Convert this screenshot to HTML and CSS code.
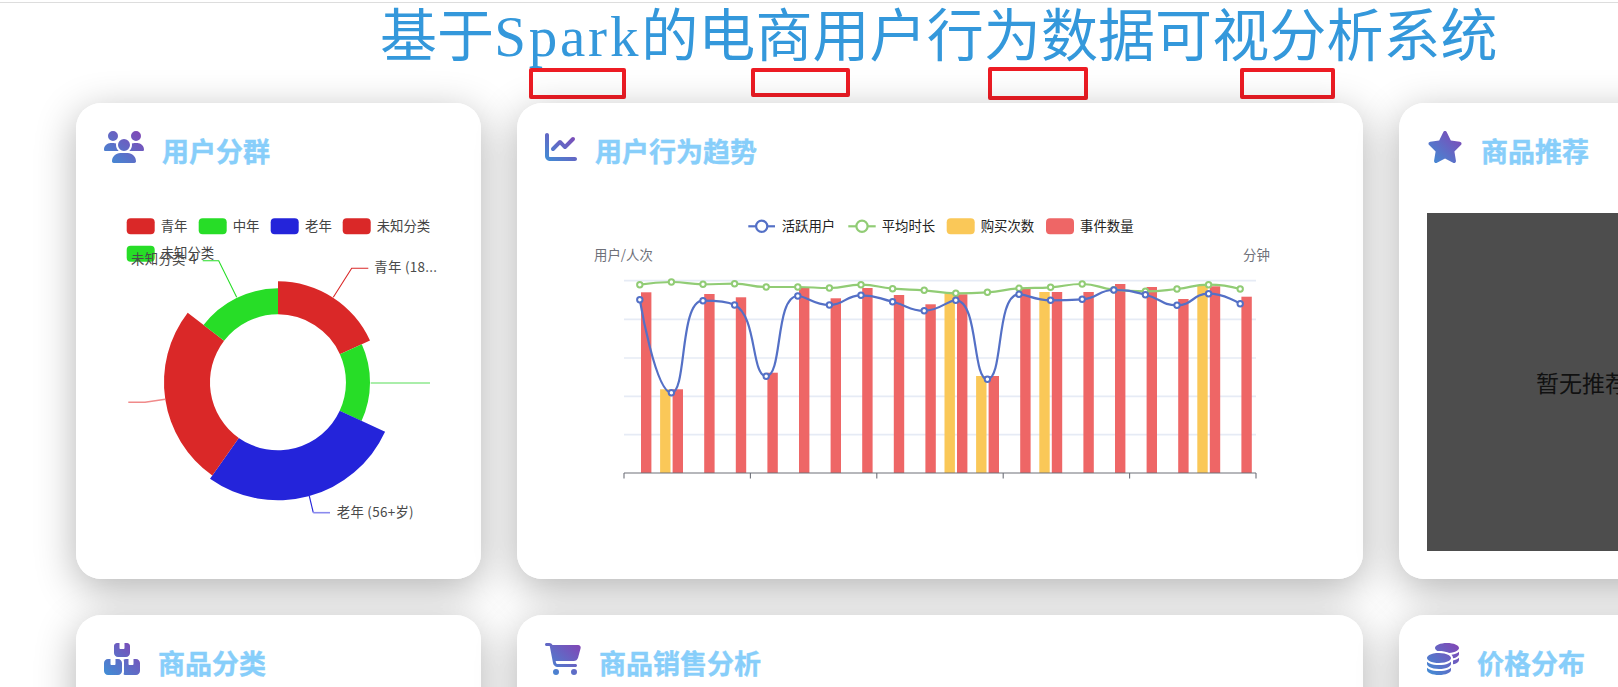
FILE: index.html
```html
<!DOCTYPE html>
<html lang="zh">
<head>
    <meta charset="UTF-8">
    <meta name="viewport" content="width=device-width, initial-scale=1.0">
    <title>基于Spark的电商用户行为数据可视分析系统</title>
    <link rel="stylesheet" href="styles.css">
</head>
<body>
    <svg width="0" height="0" class="defs">
        <defs>
            <linearGradient id="iconGrad" x1="0" y1="1" x2="1" y2="0">
                <stop offset="0" stop-color="#3f8fd6"/>
                <stop offset="1" stop-color="#8443b4"/>
            </linearGradient>
        </defs>
    </svg>

    <header class="page-head">
        <h1 class="page-title">基于<span class="latin">Spark</span>的电商用户行为数据可视分析系统</h1>
        <div class="stat-row">
            <div class="stat-box box-a"></div>
            <div class="stat-box box-b"></div>
            <div class="stat-box box-c"></div>
            <div class="stat-box box-d"></div>
        </div>
    </header>

    <main class="dashboard">
        <section class="card">
            <div class="card-head">
                <svg class="icon" viewBox="0 0 640 512"><path d="M144 0a80 80 0 1 1 0 160A80 80 0 1 1 144 0zM512 0a80 80 0 1 1 0 160A80 80 0 1 1 512 0zM0 298.7C0 239.8 47.8 192 106.7 192h42.7c15.9 0 31 3.5 44.6 9.7c-1.3 7.2-1.9 14.7-1.9 22.3c0 38.2 16.8 72.5 43.3 96c-.2 0-.4 0-.7 0H21.3C9.6 320 0 310.4 0 298.7zM405.3 320c-.2 0-.4 0-.7 0c26.6-23.5 43.3-57.8 43.3-96c0-7.6-.7-15-1.9-22.3c13.6-6.3 28.7-9.7 44.6-9.7h42.7C592.2 192 640 239.8 640 298.7c0 11.8-9.6 21.3-21.3 21.3H405.3zM224 224a96 96 0 1 1 192 0 96 96 0 1 1 -192 0zM128 485.3C128 411.7 187.7 352 261.3 352H378.7C452.3 352 512 411.7 512 485.3c0 14.7-11.9 26.7-26.7 26.7H154.7c-14.7 0-26.7-11.9-26.7-26.7z"/></svg>
                <h2 class="card-title">用户分群</h2>
            </div>
            <svg class="chart pie-chart" viewBox="104 200 349 320">
                <path fill="#da2828" d="M278 281.3A101 101 0 0 1 370 340.6L339.9 354.2A68 68 0 0 0 278 314.3Z"/>
                <path fill="#27dd27" d="M361.8 344.3A92 92 0 0 1 361.5 420.9L339.7 410.8A68 68 0 0 0 339.9 354.2Z"/>
                <path fill="#2424da" d="M385.1 431.8A118 118 0 0 1 210 478.7L238.8 437.9A68 68 0 0 0 339.7 410.8Z"/>
                <path fill="#da2828" d="M212.3 475.5A114 114 0 0 1 187.7 312.7L224.1 340.8A68 68 0 0 0 238.8 437.9Z"/>
                <path fill="#27dd27" d="M203.5 325A94 94 0 0 1 278 288.3V314.3A68 68 0 0 0 224.1 340.8Z"/>

                <polyline class="guide" stroke="#da2828" points="333.3,297.3 351.7,268.3 368.3,268.3"/>
                <polyline class="guide" stroke="#27dd27" points="236.7,297.3 218.7,260.7 202.7,260.7"/>
                <polyline class="guide wide" stroke="#8ee88e" points="370.7,383 430,383"/>
                <polyline class="guide wide" stroke="#f08a8a" points="165.3,399.3 145,402.3 128.3,402.3"/>
                <polyline class="guide" stroke="#2424da" points="309.3,496 313.3,512.7"/>
                <polyline class="guide wide" stroke="#8a8aee" points="313.3,512.7 330,512.7"/>

                <rect class="swatch" fill="#da2828" x="126.7" y="218.3" width="28" height="16" rx="4"/>
                <text class="legend-text" x="160.7" y="231">青年</text>
                <rect class="swatch" fill="#27dd27" x="198.7" y="218.3" width="28" height="16" rx="4"/>
                <text class="legend-text" x="232.7" y="231">中年</text>
                <rect class="swatch" fill="#2424da" x="270.7" y="218.3" width="28" height="16" rx="4"/>
                <text class="legend-text" x="305" y="231">老年</text>
                <rect class="swatch" fill="#da2828" x="342.7" y="218.3" width="28" height="16" rx="4"/>
                <text class="legend-text" x="376.7" y="231">未知分类</text>
                <rect class="swatch" fill="#27dd27" x="126.7" y="245.7" width="28" height="16" rx="4"/>
                <text class="legend-text" x="160.7" y="258">未知分类</text>

                <text class="pie-label" x="131" y="264">未知分类 4</text>
                <text class="pie-label" x="374.3" y="272">青年 (18...</text>
                <text class="pie-label" x="336.7" y="517">老年 (56+岁)</text>
            </svg>
        </section>

        <section class="card">
            <div class="card-head">
                <svg class="icon" viewBox="0 0 512 512"><path d="M64 64c0-17.7-14.3-32-32-32S0 46.3 0 64V400c0 44.2 35.8 80 80 80H480c17.7 0 32-14.3 32-32s-14.3-32-32-32H80c-8.8 0-16-7.2-16-16V64zm406.6 86.6c12.5-12.5 12.5-32.8 0-45.3s-32.8-12.5-45.3 0L320 210.7l-57.4-57.4c-12.5-12.5-32.8-12.5-45.3 0l-112 112c-12.5 12.5-12.5 32.8 0 45.3s32.8 12.5 45.3 0L240 221.3l57.4 57.4c12.5 12.5 32.8 12.5 45.3 0l128-128z"/></svg>
                <h2 class="card-title">用户行为趋势</h2>
            </div>
            <svg class="chart trend-chart" viewBox="545 200 790 320">
                <g class="legend-sym" stroke="#5470c6">
                    <line x1="748.3" y1="226.3" x2="775" y2="226.3"/>
                    <circle cx="761.7" cy="226.3" r="5.6"/>
                </g>
                <text class="legend-text dark" x="781.7" y="231">活跃用户</text>
                <g class="legend-sym" stroke="#91cc75">
                    <line x1="848.3" y1="226.3" x2="875.7" y2="226.3"/>
                    <circle cx="862" cy="226.3" r="5.6"/>
                </g>
                <text class="legend-text dark" x="881.7" y="231">平均时长</text>
                <rect class="swatch" fill="#fac858" x="946.7" y="218.3" width="28" height="16" rx="4"/>
                <text class="legend-text dark" x="980.7" y="231">购买次数</text>
                <rect class="swatch" fill="#ee6666" x="1046" y="218.3" width="28" height="16" rx="4"/>
                <text class="legend-text dark" x="1080" y="231">事件数量</text>

                <text class="axis-name" x="594" y="260">用户/人次</text>
                <text class="axis-name" x="1243" y="260">分钟</text>

                <g class="grid-lines">
                    <line x1="624" x2="1256" y1="280.7" y2="280.7"/>
                    <line x1="624" x2="1256" y1="319.3" y2="319.3"/>
                    <line x1="624" x2="1256" y1="358" y2="358"/>
                    <line x1="624" x2="1256" y1="396.3" y2="396.3"/>
                    <line x1="624" x2="1256" y1="434.7" y2="434.7"/>
                </g>
                <g id="trendSeries"></g>
                <g class="axis-lines">
                    <line x1="624" x2="1256" y1="473" y2="473"/>
                    <line x1="624" x2="624" y1="473" y2="478.6"/>
                    <line x1="750.4" x2="750.4" y1="473" y2="478.6"/>
                    <line x1="876.8" x2="876.8" y1="473" y2="478.6"/>
                    <line x1="1003.2" x2="1003.2" y1="473" y2="478.6"/>
                    <line x1="1129.6" x2="1129.6" y1="473" y2="478.6"/>
                    <line x1="1256" x2="1256" y1="473" y2="478.6"/>
                </g>
            </svg>
        </section>

        <section class="card">
            <div class="card-head">
                <svg class="icon" viewBox="0 0 576 512"><path d="M316.9 18C311.6 7 300.4 0 288.1 0s-23.4 7-28.8 18L195 150.3 51.4 171.5c-12 1.8-22 10.2-25.7 21.7s-.7 24.2 7.9 32.7L137.8 329 113.2 474.7c-2 12 3 24.2 12.9 31.3s23 8 33.8 2.3l128.3-68.5 128.3 68.5c10.8 5.7 23.9 4.9 33.8-2.3s14.9-19.3 12.9-31.3L438.5 329 542.7 225.9c8.6-8.5 11.7-21.2 7.9-32.7s-13.7-19.9-25.7-21.7L381.2 150.3 316.9 18z"/></svg>
                <h2 class="card-title">商品推荐</h2>
            </div>
            <div class="empty-box">暂无推荐数据</div>
        </section>

        <section class="card">
            <div class="card-head">
                <svg class="icon" viewBox="0 0 576 512"><path d="M248 0H208c-26.5 0-48 21.5-48 48V160c0 35.3 28.7 64 64 64H352c35.3 0 64-28.7 64-64V48c0-26.5-21.5-48-48-48H328V80c0 8.8-7.2 16-16 16H264c-8.8 0-16-7.2-16-16V0zM64 256c-35.3 0-64 28.7-64 64V448c0 35.3 28.7 64 64 64H224c35.3 0 64-28.7 64-64V320c0-35.3-28.7-64-64-64H184v80c0 8.8-7.2 16-16 16H120c-8.8 0-16-7.2-16-16V256H64zM352 512H512c35.3 0 64-28.7 64-64V320c0-35.3-28.7-64-64-64H472v80c0 8.8-7.2 16-16 16H408c-8.8 0-16-7.2-16-16V256H352c-15 0-28.8 5.1-39.7 13.8c4.9 10.4 7.7 22 7.7 34.2V464c0 12.2-2.8 23.8-7.7 34.2C323.2 506.9 337 512 352 512z"/></svg>
                <h2 class="card-title">商品分类</h2>
            </div>
        </section>

        <section class="card">
            <div class="card-head">
                <svg class="icon" viewBox="0 0 576 512"><path d="M0 24C0 10.7 10.7 0 24 0H69.5c22 0 41.5 12.8 50.6 32h411c26.3 0 45.5 25 38.6 50.4l-41 152.3c-8.5 31.4-37 53.3-69.5 53.3H170.7l5.4 28.5c2.2 11.3 12.1 19.5 23.6 19.5H488c13.3 0 24 10.7 24 24s-10.7 24-24 24H199.7c-34.6 0-64.3-24.6-70.7-58.5L77.4 54.5c-.7-3.8-4-6.5-7.9-6.5H24C10.7 48 0 37.3 0 24zM128 464a48 48 0 1 1 96 0 48 48 0 1 1 -96 0zm336-48a48 48 0 1 1 0 96 48 48 0 1 1 0-96z"/></svg>
                <h2 class="card-title">商品销售分析</h2>
            </div>
        </section>

        <section class="card">
            <div class="card-head">
                <svg class="icon" viewBox="0 0 512 512"><path d="M512 80c0 18-14.3 34.6-38.4 48c-29.1 16.1-72.5 27.5-122.3 30.9c-3.7-1.8-7.4-3.5-11.3-5C300.6 137.4 248.2 128 192 128c-8.3 0-16.4 .2-24.5 .6l-1.1-.6C142.3 114.6 128 98 128 80c0-44.2 86-80 192-80S512 35.8 512 80zM160.7 161.1c10.2-.7 20.7-1.1 31.3-1.1c62.2 0 117.4 12.3 152.5 31.4C369.3 204.9 384 221.7 384 240c0 4-.7 7.9-2.1 11.7c-4.6 13.2-17 25.3-35 35.5c0 0 0 0 0 0c-.1 .1-.3 .1-.4 .2l0 0 0 0c-.3 .2-.6 .3-.9 .5c-35 19.4-90.8 32-153.6 32c-59.6 0-112.9-11.3-148.2-29.1c-1.9-.9-3.7-1.9-5.5-2.9C14.3 274.6 0 258 0 240c0-34.8 53.4-64.5 128-75.4c10.5-1.5 21.4-2.7 32.7-3.5zM416 240c0-21.9-10.6-39.9-24.1-53.4c28.3-4.4 54.2-11.4 76.2-20.5c16.3-6.8 31.5-15.2 43.9-25.5V176c0 19.3-16.5 37.1-43.8 50.9c-14.6 7.4-32.4 13.7-52.4 18.5c.1-1.8 .2-3.5 .2-5.3zm-32 96c0 18-14.3 34.6-38.4 48c-1.8 1-3.6 1.9-5.5 2.9C304.9 404.7 251.6 416 192 416c-62.8 0-118.6-12.6-153.6-32C14.3 370.6 0 354 0 336V300.6c12.5 10.3 27.6 18.7 43.9 25.5C83.4 342.6 135.8 352 192 352s108.6-9.4 148.1-25.9c7.8-3.2 15.3-6.9 22.4-10.9c6.1-3.4 11.8-7.2 17.2-11.2c1.5-1.1 2.9-2.3 4.3-3.4V304v5.7V336zm32 0V304 278.1c19-4.2 36.5-9.5 52.1-16c16.3-6.8 31.5-15.2 43.9-25.5V272c0 10.5-5 21-14.9 30.9c-16.3 16.3-45 29.7-81 38.4c.1-1.7 .2-3.5 .2-5.3zM192 448c56.2 0 108.6-9.4 148.1-25.9c16.3-6.8 31.5-15.2 43.9-25.5V432c0 44.2-86 80-192 80S0 476.2 0 432V396.6c12.5 10.3 27.6 18.7 43.9 25.5C83.4 438.6 135.8 448 192 448z"/></svg>
                <h2 class="card-title">价格分布</h2>
            </div>
        </section>
    </main>

    <script src="script.js"></script>
</body>
</html>
```

FILE: styles.css
```css
html, body {
    margin: 0;
    height: 687px;
    overflow: hidden;
    background: #fff;
}
body {
    font-family: "Liberation Serif", "Noto Sans CJK SC", serif;
}
.defs {
    display: block;
    height: 0;
}
.page-head {
    height: 101px;
    box-sizing: border-box;
    border-top: 1px solid #ddd;
    margin-top: 2px;
}
.page-title {
    margin: 0;
    padding: 3px 0 0 380px;
    height: 59px;
    font-size: 57px;
    line-height: 62px;
    font-weight: 400;
    letter-spacing: 0.1px;
    color: #3498db;
    white-space: nowrap;
}
.latin {
    letter-spacing: 2.8px;
}
.stat-row {
    display: flex;
    padding-left: 529px;
    margin-top: 3px;
}
.stat-box {
    box-sizing: border-box;
    height: 31px;
    border: 4px solid #ed1c24;
    border-radius: 2px;
}
.box-a { width: 97px; }
.box-b { width: 99px; height: 29px; margin-left: 125px; }
.box-c { width: 100px; height: 33px; margin-left: 138px; margin-top: -1px; }
.box-d { width: 95px; margin-left: 152px; }

.dashboard {
    display: grid;
    grid-template-columns: 405px 846px 412px;
    grid-template-rows: 476px 476px;
    gap: 36px;
    padding: 0 0 0 76px;
    width: 1800px;
}
.card {
    position: relative;
    box-sizing: border-box;
    padding: 28px;
    background: rgba(255, 255, 255, 0.96);
    border-radius: 25px;
    box-shadow: 0 10px 40px rgba(0, 0, 0, 0.3);
}
.card-head {
    display: flex;
    height: 40px;
}
.icon {
    height: 32px;
    margin-right: 18px;
    fill: url(#iconGrad);
    flex: none;
}
.card-title {
    margin: 4px 0 0;
    font-family: "Noto Sans CJK SC", sans-serif;
    font-size: 27px;
    line-height: 32px;
    font-weight: 700;
    color: #87cefa;
    -webkit-text-stroke: 0.4px #87cefa;
    white-space: nowrap;
}
.chart {
    display: block;
    margin-top: 29px;
    height: 320px;
    font-family: "Noto Sans CJK SC", sans-serif;
}
.pie-chart {
    width: 349px;
}
.trend-chart {
    width: 790px;
}
.guide {
    fill: none;
    stroke-width: 1.1;
}
.guide.wide {
    stroke-width: 1.6;
}
.swatch {
    stroke: none;
}
.legend-text {
    font-size: 13.4px;
    fill: #444;
}
.legend-text.dark {
    fill: #222;
}
.pie-label {
    font-size: 13.4px;
    letter-spacing: 0.3px;
    fill: #4a4a4a;
}
.axis-name {
    font-size: 13.4px;
    fill: #6e7079;
}
.legend-sym {
    fill: #fff;
    stroke-width: 2.2;
}
.grid-lines line {
    stroke: #e6ebf5;
    stroke-width: 1.7;
}
.axis-lines line {
    stroke: #6e7079;
    stroke-width: 1.1;
}
.empty-box {
    display: flex;
    align-items: center;
    justify-content: center;
    margin-top: 42px;
    height: 338px;
    background: #4d4d4d;
    color: #111;
    font-family: "Noto Sans CJK SC", sans-serif;
    font-size: 23px;
    white-space: nowrap;
}
```

FILE: script.js
```js
// 用户行为趋势 chart: bars first, then the two smooth lines on top
var xs = [];
for (var i = 0; i < 20; i++) xs.push(639.8 + 31.6 * i);

var active = [299.7, 392.7, 300.7, 305, 376.3, 296, 305, 295.3, 301.7, 310.7, 300.3, 379.3, 294.3, 300.3, 299.3, 290, 294.7, 305.3, 293.7, 303.7];
var duration = [284.7, 282, 284.3, 283.7, 287, 287, 288, 284.7, 288.7, 290.3, 293.3, 292.3, 288.3, 287.3, 284, 289.7, 291.3, 289, 284.7, 289];
var events = [292.3, 389.3, 294, 297.3, 372.7, 288, 298.3, 288, 295, 304.3, 294.3, 376, 289, 292, 292, 284, 287, 299, 286.3, 296.7];
var buys = { 1: 389.3, 10: 293.3, 11: 376, 13: 292, 18: 286 };

var BASE = 473;
var BAR = 10.4;

function clamp(v, a, b) {
    return Math.max(Math.min(a, b), Math.min(v, Math.max(a, b)));
}

function smoothPath(ys) {
    // control points kept between neighbours so the curve doesn't overshoot
    var smooth = 0.5;
    var d = "M" + xs[0] + " " + ys[0];
    var outX = xs[0], outY = ys[0];
    for (var i = 1; i < xs.length; i++) {
        var x = xs[i], y = ys[i];
        var inX = x, inY = y, nextX = x, nextY = y;
        if (i < xs.length - 1) {
            var lenPrev = Math.hypot(x - xs[i - 1], y - ys[i - 1]);
            var lenNext = Math.hypot(xs[i + 1] - x, ys[i + 1] - y);
            var r = lenNext / (lenNext + lenPrev);
            var vx = xs[i + 1] - xs[i - 1];
            var vy = ys[i + 1] - ys[i - 1];
            nextX = clamp(x + vx * smooth * r, x, xs[i + 1]);
            nextY = clamp(y + vy * smooth * r, y, ys[i + 1]);
            inX = clamp(x - (nextX - x) * lenPrev / lenNext, x, xs[i - 1]);
            inY = clamp(y - (nextY - y) * lenPrev / lenNext, y, ys[i - 1]);
            nextX = x + (x - inX) * lenNext / lenPrev;
            nextY = y + (y - inY) * lenNext / lenPrev;
        }
        d += "C" + outX.toFixed(1) + " " + outY.toFixed(1) + " " +
            inX.toFixed(1) + " " + inY.toFixed(1) + " " +
            x.toFixed(1) + " " + y.toFixed(1);
        outX = nextX;
        outY = nextY;
    }
    return d;
}

function lineSeries(ys, color) {
    var html = '<path fill="none" stroke="' + color + '" stroke-width="2.2" d="' + smoothPath(ys) + '"/>';
    ys.forEach(function (y, i) {
        html += '<circle cx="' + xs[i].toFixed(1) + '" cy="' + y + '" r="2.7" fill="#fff" stroke="' + color + '" stroke-width="2"/>';
    });
    return html;
}

var html = "";
xs.forEach(function (x, i) {
    if (buys[i]) {
        html += '<rect fill="#fac858" x="' + (x - 11.3).toFixed(1) + '" y="' + buys[i] + '" width="' + BAR + '" height="' + (BASE - buys[i]).toFixed(1) + '"/>';
    }
    html += '<rect fill="#ee6666" x="' + (x + 1.2).toFixed(1) + '" y="' + events[i] + '" width="' + BAR + '" height="' + (BASE - events[i]).toFixed(1) + '"/>';
});
html += lineSeries(duration, "#91cc75");
html += lineSeries(active, "#5470c6");
document.getElementById("trendSeries").innerHTML = html;
```
